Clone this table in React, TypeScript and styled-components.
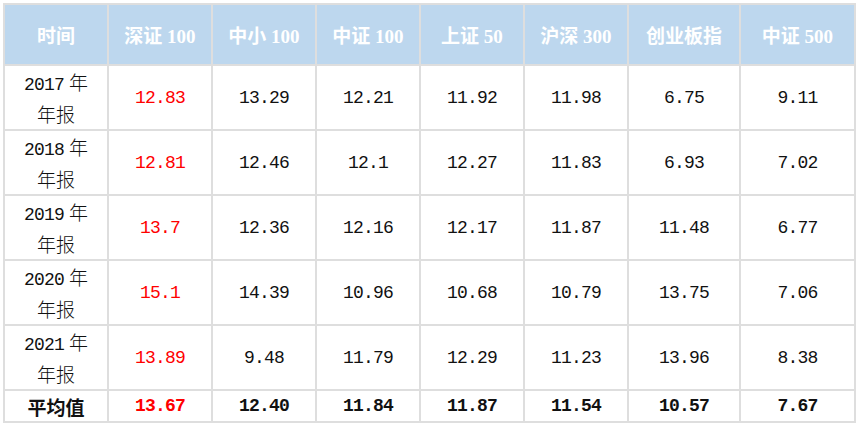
import styled, { createGlobalStyle } from 'styled-components';

const GlobalStyle = createGlobalStyle`
  body {
    margin: 0;
    background: #ffffff;
  }
`;

const Page = styled.div`
  padding: 3px 0 0 3px;
`;

const Table = styled.table`
  border-collapse: collapse;
  font-family: "Liberation Serif", "Noto Sans CJK SC", serif;
`;

const HeadCell = styled.th<{ $w: number }>`
  width: ${({ $w }) => $w}px;
  min-width: ${({ $w }) => $w}px;
  max-width: ${({ $w }) => $w}px;
  padding: 0;
  background: #bdd7ee;
  color: #ffffff;
  font-size: 19px;
  font-weight: bold;
  text-align: center;
  border: 2px solid #dedede;
`;

const Cell = styled.td`
  padding: 0;
  text-align: center;
  border: 2px solid #dedede;
  color: #111111;
  font-size: 19px;
`;

const Box = styled.div<{ $h: number }>`
  height: ${({ $h }) => $h}px;
  display: flex;
  flex-direction: column;
  align-items: center;
  justify-content: center;
  overflow: hidden;
`;

const Line = styled.div`
  height: 32px;
  line-height: 32px;
  white-space: nowrap;
`;

const Num = styled.span<{ $red?: boolean; $bold?: boolean }>`
  font-family: "Liberation Mono", monospace;
  font-size: 18px;
  letter-spacing: -0.8px;
  color: ${({ $red }) => ($red ? '#ff0000' : '#111111')};
  font-weight: ${({ $bold }) => ($bold ? 'bold' : 'normal')};
`;

const Label = styled.span<{ $bold?: boolean }>`
  font-family: "Noto Sans CJK SC", sans-serif;
  font-weight: ${({ $bold }) => ($bold ? 'bold' : 300)};
  font-size: 19px;
`;

const headers = [
  { t: '时间', w: 102 },
  { t: '深证 100', w: 102 },
  { t: '中小 100', w: 102 },
  { t: '中证 100', w: 102 },
  { t: '上证 50', w: 102 },
  { t: '沪深 300', w: 102 },
  { t: '创业板指', w: 110 },
  { t: '中证 500', w: 113 },
];

const rows = [
  { year: '2017', vals: ['12.83', '13.29', '12.21', '11.92', '11.98', '6.75', '9.11'] },
  { year: '2018', vals: ['12.81', '12.46', '12.1', '12.27', '11.83', '6.93', '7.02'] },
  { year: '2019', vals: ['13.7', '12.36', '12.16', '12.17', '11.87', '11.48', '6.77'] },
  { year: '2020', vals: ['15.1', '14.39', '10.96', '10.68', '10.79', '13.75', '7.06'] },
  { year: '2021', vals: ['13.89', '9.48', '11.79', '12.29', '11.23', '13.96', '8.38'] },
];

const average = ['13.67', '12.40', '11.84', '11.87', '11.54', '10.57', '7.67'];

export default function App() {
  return (
    <Page>
      <GlobalStyle />
      <Table>
        <thead>
          <tr>
            {headers.map((h) => (
              <HeadCell key={h.t} $w={h.w}>
                <Box $h={59}>{h.t}</Box>
              </HeadCell>
            ))}
          </tr>
        </thead>
        <tbody>
          {rows.map((r) => (
            <tr key={r.year}>
              <Cell>
                <Box $h={63}>
                  <Line>
                    <Num>{r.year}</Num> <Label>年</Label>
                  </Line>
                  <Line>
                    <Label>年报</Label>
                  </Line>
                </Box>
              </Cell>
              {r.vals.map((v, i) => (
                <Cell key={i}>
                  <Box $h={63}>
                    <Num $red={i === 0}>{v}</Num>
                  </Box>
                </Cell>
              ))}
            </tr>
          ))}
          <tr>
            <Cell>
              <Box $h={30}>
                <Label $bold>平均值</Label>
              </Box>
            </Cell>
            {average.map((v, i) => (
              <Cell key={i}>
                <Box $h={30}>
                  <Num $bold $red={i === 0}>{v}</Num>
                </Box>
              </Cell>
            ))}
          </tr>
        </tbody>
      </Table>
    </Page>
  );
}
